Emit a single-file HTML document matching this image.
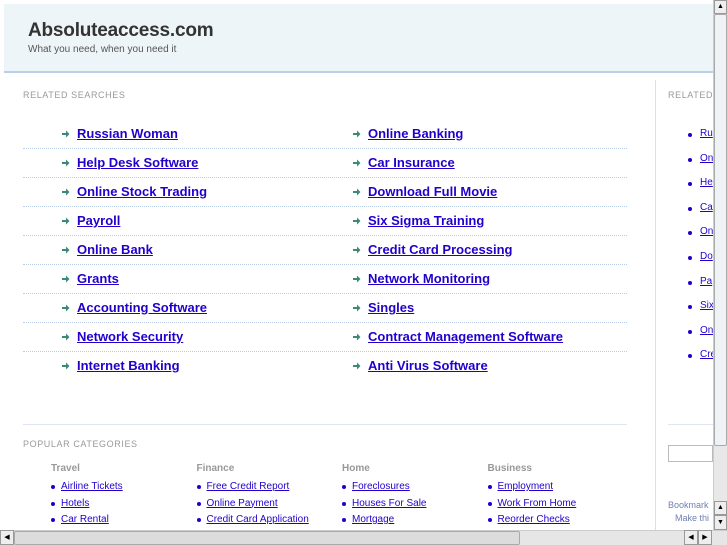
<!DOCTYPE html>
<html><head><style>
*{margin:0;padding:0;box-sizing:border-box}
body{width:727px;height:545px;overflow:hidden;background:#fff;font-family:"Liberation Sans",Arial,sans-serif;position:relative}
.hdr{position:absolute;left:4px;top:4px;width:709px;height:69px;background:#eef5f8;border-bottom:2px solid #bccfe9}
.hdr h1{position:absolute;left:24px;top:16px;font-size:19px;color:#333;font-weight:bold;letter-spacing:-0.2px}
.hdr p{position:absolute;left:24px;top:40px;font-size:10px;color:#555}
.lbl{position:absolute;font-size:9px;color:#999;letter-spacing:0.6px}
.r{position:absolute;font-size:13px;font-weight:bold;color:#2200cc;text-decoration:underline}
.ar{position:absolute;width:8px;height:8px}
.sep{position:absolute;left:23px;width:604px;border-top:1px dotted #b9cde8}
.ch{position:absolute;font-size:10px;font-weight:bold;color:#999}
.cl{position:absolute;font-size:10px;color:#2200cc;text-decoration:underline}
.b{position:absolute;width:4px;height:4px;border-radius:50%;background:#2200cc}
.rl{position:absolute;font-size:10px;color:#2200cc;text-decoration:underline}
</style></head><body>
<div class="hdr"><h1>Absoluteaccess.com</h1><p>What you need, when you need it</p></div>
<div class="lbl" style="left:23px;top:90px">RELATED SEARCHES</div>
<div style="position:absolute;left:655px;top:80px;width:1px;height:450px;background:#d5e0f0"></div>
<div class="lbl" style="left:668px;top:90px">RELATED</div>

<div id="rows"></div>
<div style="position:absolute;left:23px;top:424px;width:604px;border-top:1px solid #dde6f2"></div>
<div style="position:absolute;left:668px;top:424px;width:45px;border-top:1px solid #dde6f2"></div>
<div class="lbl" style="left:23px;top:439px">POPULAR CATEGORIES</div>
<div style="position:absolute;left:668px;top:445px;width:45px;height:17px;border:1px solid #bbb"></div>
<div style="position:absolute;left:668px;top:500px;font-size:9px;color:#7080b0">Bookmark</div>
<div style="position:absolute;left:675px;top:513px;font-size:9px;color:#7080b0">Make thi</div>

<div style="position:absolute;left:713px;top:0;width:14px;height:530px;background:#e8e8e8;border-left:1px solid #ccc"></div>
<div style="position:absolute;left:714px;top:0;width:13px;height:14px;background:#eee;border:1px solid #999;font-size:7px;text-align:center;line-height:12px">▲</div>
<div style="position:absolute;left:714px;top:14px;width:13px;height:432px;background:#f0f3f5;border:1px solid #aaa;border-radius:2px"></div>
<div style="position:absolute;left:714px;top:501px;width:13px;height:14px;background:#eee;border:1px solid #999;font-size:7px;text-align:center;line-height:12px">▲</div>
<div style="position:absolute;left:714px;top:515px;width:13px;height:15px;background:#eee;border:1px solid #999;font-size:7px;text-align:center;line-height:13px">▼</div>
<div style="position:absolute;left:0;top:530px;width:727px;height:15px;background:#e6e6e6;border-top:1px solid #ccc"></div>
<div style="position:absolute;left:0;top:530px;width:14px;height:15px;background:#eee;border:1px solid #999;font-size:7px;text-align:center;line-height:13px">◀</div>
<div style="position:absolute;left:14px;top:531px;width:506px;height:14px;background:#dcdcdc;border:1px solid #aaa;border-radius:2px"></div>
<div style="position:absolute;left:684px;top:530px;width:14px;height:15px;background:#eee;border:1px solid #999;font-size:7px;text-align:center;line-height:13px">◀</div>
<div style="position:absolute;left:698px;top:530px;width:14px;height:15px;background:#eee;border:1px solid #999;font-size:7px;text-align:center;line-height:13px">▶</div>

<script>
var L=["Russian Woman","Help Desk Software","Online Stock Trading","Payroll","Online Bank","Grants","Accounting Software","Network Security","Internet Banking"];
var R=["Online Banking","Car Insurance","Download Full Movie","Six Sigma Training","Credit Card Processing","Network Monitoring","Singles","Contract Management Software","Anti Virus Software"];
var h="",svg='<svg class="ar" viewBox="0 0 8 8" style="left:XPX;top:YPX"><path d="M0 3h4V0.5L7.5 4 4 7.5V5H0z" fill="#3a8a7a"/></svg>';
for(var i=0;i<9;i++){var y=126+i*29;
h+=svg.replace("X",62).replace("Y",y+4)+'<div class="r" style="left:77px;top:'+y+'px">'+L[i]+'</div>';
h+=svg.replace("X",353).replace("Y",y+4)+'<div class="r" style="left:368px;top:'+y+'px">'+R[i]+'</div>';
if(i<8)h+='<div class="sep" style="top:'+(y+22)+'px"></div>';}
var RR=["Ru","Onl","He","Ca","Onl","Do","Pa","Six","Onl","Cre"];
for(var i=0;i<10;i++){var y=128+i*24.6;h+='<div class="b" style="left:688px;top:'+(y+5)+'px"></div><div class="rl" style="left:700px;top:'+y+'px">'+RR[i]+'</div>';}
var C=[["Travel","Airline Tickets","Hotels","Car Rental"],["Finance","Free Credit Report","Online Payment","Credit Card Application"],["Home","Foreclosures","Houses For Sale","Mortgage"],["Business","Employment","Work From Home","Reorder Checks"]];
for(var j=0;j<4;j++){var x=51+j*145.5;h+='<div class="ch" style="left:'+x+'px;top:463px">'+C[j][0]+'</div>';
for(var k=1;k<4;k++){var y=481+(k-1)*16.5;h+='<div class="b" style="left:'+x+'px;top:'+(y+4)+'px"></div><div class="cl" style="left:'+(x+10)+'px;top:'+y+'px">'+C[j][k]+'</div>';}}
document.getElementById("rows").innerHTML=h;
</script>
</body></html>
